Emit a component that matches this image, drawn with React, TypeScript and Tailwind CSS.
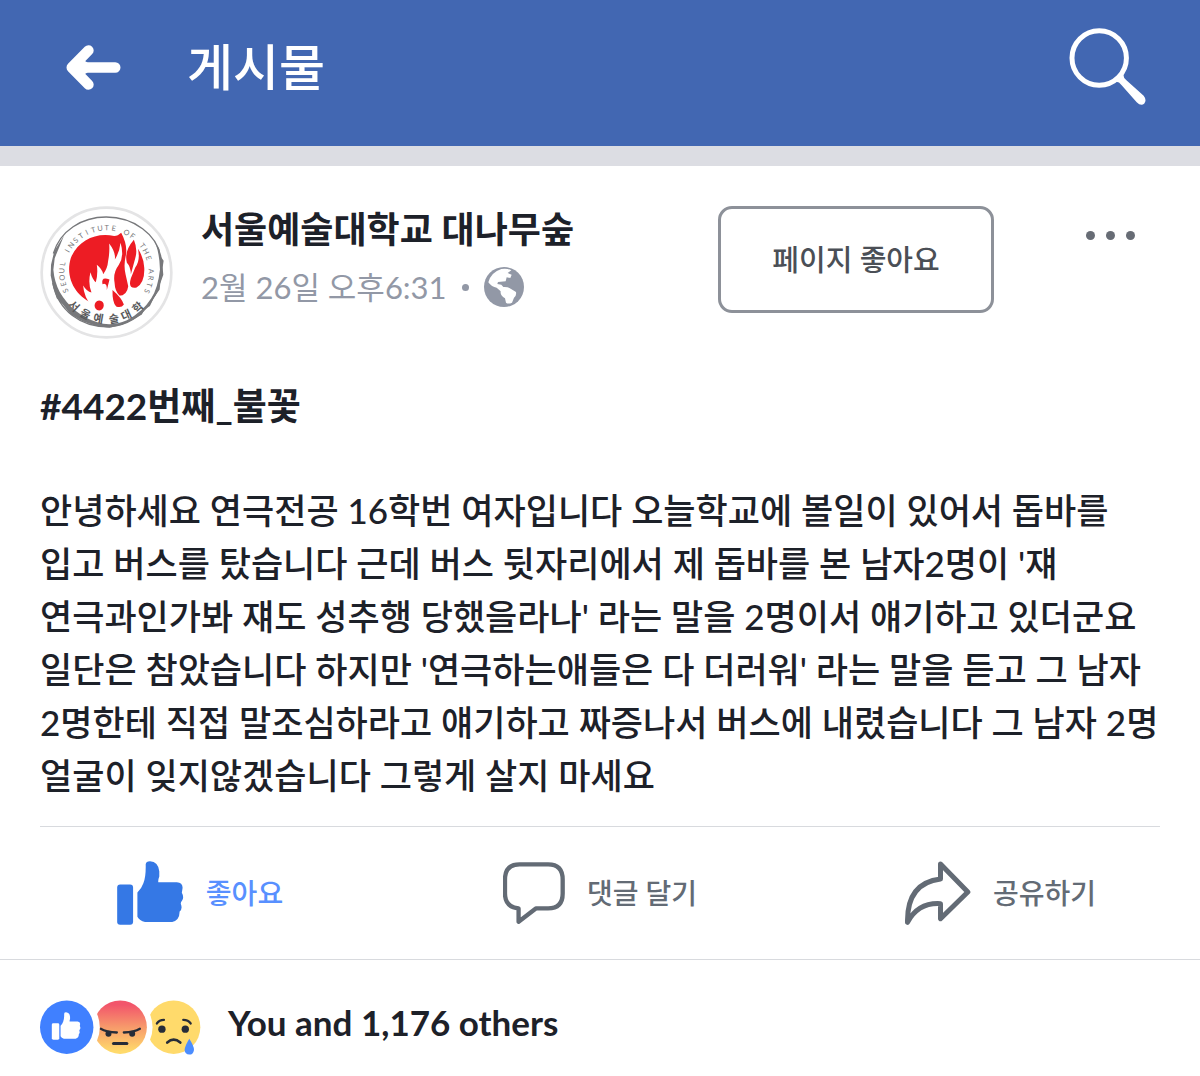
import React from 'react';

interface ActionButtonProps {
  label: string;
  active?: boolean;
  children: React.ReactNode;
}

const LIKE_PALM =
  'M138 57 Q139 48 151 48 Q176 50 179 78 V94 Q175 104 176 111 H232 Q251 113 249 130 L247 143 Q255 157 247 168 Q243 172 244 177 Q250 192 240 200 Q241 224 218 231 H136 Q119 227 113 215 V142 Q125 131 131 114 Q139 95 138 57Z';

const ArrowIcon = () => (
  <svg viewBox="78 72 164 134" className="h-[45px] w-[55px]" aria-hidden="true">
    <path
      d="M145 88 L95 139 L145 190 M95 139 H225"
      fill="none"
      stroke="#fff"
      strokeWidth="31"
      strokeLinecap="round"
      strokeLinejoin="round"
    />
    <path d="M118 110 L142 124 V154 L118 168Z" fill="#fff" />
  </svg>
);

const SearchIcon = () => (
  <svg viewBox="86 52 232 231" className="size-[77px]" aria-hidden="true">
    <circle cx="177" cy="142" r="82" fill="none" stroke="#fff" strokeWidth="15" />
    <path
      d="M225 214 Q236 212 244 223 L290 275 Q303 288 313 279 Q321 269 311 256 L259 209 Q248 201 251 190Z"
      fill="#fff"
    />
  </svg>
);

const GlobeIcon = () => (
  <svg viewBox="878 215 120 120" className="size-10" aria-hidden="true">
    <circle cx="938" cy="275" r="60" fill="#9298a6" />
    <path
      d="M891 261 Q899 231 930 221 Q948 218 960 225 L949 233 L961 238 L957 248 L946 246 L943 258 L920 260 L918 266 L930 268 L936 275 Q950 274 958 280 L974 290 Q976 301 968 307 L962 322 Q950 327 944 322 L941 309 Q926 300 928 288 L916 277 Q901 275 891 261Z"
      fill="#fff"
    />
  </svg>
);

const LikeIcon = () => (
  <svg viewBox="52 47 201 193" className="h-[64px] w-[67px]" aria-hidden="true">
    <rect x="52" y="118" width="48" height="121" rx="9" fill="#3578e5" />
    <path d={LIKE_PALM} fill="#3578e5" />
  </svg>
);

const CommentIcon = () => (
  <svg viewBox="68 57 187 187" className="size-[62px]" aria-hidden="true">
    <path
      d="M118 64 H204 Q248 64 248 110 V152 Q248 197 204 197 H167 L115 237 V197 Q74 193 74 152 V110 Q74 64 118 64Z"
      fill="none"
      stroke="#636b75"
      strokeWidth="13"
      strokeLinejoin="round"
    />
  </svg>
);

const ShareIcon = () => (
  <svg viewBox="46 50 200 192" className="h-[64px] w-[67px]" aria-hidden="true">
    <path
      d="M155 59 L237 143 L155 223 V178 Q88 174 56 234 Q54 116 155 104Z"
      fill="none"
      stroke="#636b75"
      strokeWidth="15"
      strokeLinejoin="round"
    />
  </svg>
);

const RING_LATIN = 'SEOUL INSTITUTE OF THE ARTS'.split('');

// Letter and its angle on the ring, measured from straight down
const RING_HANGUL: [string, number][] = [
  ['서', 44],
  ['울', 27],
  ['예', 10],
  ['술', -9],
  ['대', -25],
  ['학', -42],
];

const PageLogo = () => (
  <svg viewBox="32 34 398 398" className="size-[133px] shrink-0" role="img" aria-label="서울예술대학">
    <circle cx="231" cy="233" r="194" fill="#fff" stroke="#e4e4e5" strokeWidth="8" />
    {/* Brushed outer ring */}
    <path
      d="M72 176 C92 108 157 67 230 67 C312 67 384 119 394 190 C409 283 344 384 245 395 C153 400 86 345 70 263"
      fill="none"
      stroke="#77787b"
      strokeWidth="4"
    />
    <path
      d="M378 146 L389 163 L393 185 L402 198 L399 218 L401 240 L392 265 L390 284 L372 310 L361 333 L343 345 L337 359 L311 374 L278 389 L240 398 L201 393 L159 379 L123 357 L99 327 L82 310 L71 275 L64 242 L65 210 L75 168 L104 122 L76 190 L72 225 Q75 262 91 291 Q130 358 204 382 Q245 396 292 376 Q340 350 365 310 Q385 280 391 224 Q390 180 378 146Z"
      fill="#77787b"
    />
    {/* Flame emblem */}
    <path
      d="M275 114 C268 120 262 124 254 124 C200 112 145 137 124 190 C106 250 140 308 196 327 L262 302 Q292 306 296 274 L288 238 Q282 214 288 186 Q296 153 275 114Z"
      fill="#ed1c24"
    />
    <path
      d="M186 332 Q164 308 161 272 Q172 290 186 293 Q175 265 183 232 Q189 254 199 262 Q206 236 202 210 Q219 224 221 238 Q234 222 236 198 Q241 172 239 146 Q259 172 256 194 Q270 172 273 144 Q285 185 268 210 Q250 234 255 262 Q256 290 271 303 L290 340Z"
      fill="#fff"
    />
    <path
      d="M313 135 Q283 169 292 204 Q303 215 304 238 L317 190 Q325 164 313 135Z M325 162 Q333 196 317 218 L304 250 Q294 283 321 278 Q346 262 344 219 Q342 186 325 162Z"
      fill="#ed1c24"
    />
    <path
      d="M209 317 C228 317 227 346 209 347 C191 346 191 318 209 317Z M249 285 Q277 309 283 329 Q276 340 260 335 Q248 322 249 285Z M232 285 L240 254 Q214 244 219 268 Q233 262 232 285Z"
      fill="#ed1c24"
    />
    <g className="font-['Lato',sans-serif]" fontSize="22" fill="#77787b" textAnchor="middle">
      {RING_LATIN.map((char, i) => (
        <text key={i} x="231" y="107" transform={`rotate(${-114 + i * 8.8} 231 233)`}>
          {char}
        </text>
      ))}
    </g>
    <g className="font-['Noto_Sans_CJK_KR',sans-serif] font-bold" fontSize="33" fill="#58595b" textAnchor="middle">
      {RING_HANGUL.map(([char, angle]) => (
        <text key={char} x="231" y="385" transform={`rotate(${angle} 231 233)`}>
          {char}
        </text>
      ))}
    </g>
  </svg>
);

const Reactions = () => (
  <svg viewBox="30 44 482 164" className="h-[55px] w-[161px] shrink-0" role="img" aria-label="Like, Angry, Sad">
    <defs>
      <linearGradient id="angry" x1="0" y1="0" x2="0" y2="1">
        <stop offset="0.08" stopColor="#f2556b" />
        <stop offset="0.5" stopColor="#f79a6b" />
        <stop offset="0.95" stopColor="#ffda6b" />
      </linearGradient>
    </defs>
    <circle cx="430" cy="125" r="80" fill="#ffda6b" />
    <g fill="none" stroke="#262c38" strokeWidth="7" strokeLinecap="round">
      <path d="M380 114 Q387 103 401 103 M459 103 Q474 103 481 114" />
      <path d="M411 171 Q430 154 450 171" strokeWidth="8" />
    </g>
    <circle cx="395" cy="131" r="11" fill="#262c38" />
    <circle cx="465" cy="131" r="11" fill="#262c38" />
    <path d="M477 160 Q491 182 491 193 Q489 207 477 207 Q464 206 463 193 Q464 181 477 160Z" fill="#4b8dff" />

    <circle cx="270" cy="125" r="97" fill="#fff" />
    <circle cx="270" cy="125" r="80" fill="url(#angry)" />
    <g fill="none" stroke="#262c38" strokeLinecap="round">
      <path d="M212 130 Q228 140 260 141 M281 141 Q313 140 329 130" strokeWidth="7" />
      <path d="M250 174 H290" strokeWidth="9" />
    </g>
    <circle cx="235" cy="145" r="9" fill="#262c38" />
    <circle cx="306" cy="145" r="9" fill="#262c38" />

    <circle cx="110" cy="125" r="99" fill="#fff" />
    <circle cx="110" cy="125" r="80" fill="#4080ff" />
    <g transform="translate(43 60) scale(0.43)" fill="#fff">
      <rect x="52" y="124" width="52" height="114" rx="10" />
      <path d={LIKE_PALM} />
    </g>
  </svg>
);

const ActionButton: React.FC<ActionButtonProps> = ({ label, active, children }) => (
  <button type="button" className="flex items-center justify-center gap-[22px]">
    {children}
    <span className={active ? 'text-[28px] font-medium text-[#5890ff]' : 'text-[28px] font-medium text-[#636b75]'}>
      {label}
    </span>
  </button>
);

const BODY_LINES = [
  '안녕하세요 연극전공 16학번 여자입니다 오늘학교에 볼일이 있어서 돕바를',
  "입고 버스를 탔습니다 근데 버스 뒷자리에서 제 돕바를 본 남자2명이 '쟤",
  "연극과인가봐 쟤도 성추행 당했을라나' 라는 말을 2명이서 얘기하고 있더군요",
  "일단은 참았습니다 하지만 '연극하는애들은 다 더러워' 라는 말을 듣고 그 남자",
  '2명한테 직접 말조심하라고 얘기하고 짜증나서 버스에 내렸습니다 그 남자 2명',
  '얼굴이 잊지않겠습니다 그렇게 살지 마세요',
];

export default function App() {
  return (
    <div className="min-h-screen bg-white font-['Lato','Noto_Sans_CJK_KR',sans-serif] text-[#1d2129]">
      <header className="flex items-start justify-between border-b-20 border-[#dcdde3] bg-[#4267b2] pr-[54px] pl-[66px]">
        <div className="flex h-[134px] items-center gap-[66px]">
          <button type="button" aria-label="Back">
            <ArrowIcon />
          </button>
          <h1 className="text-[50px] leading-none font-medium text-white">게시물</h1>
        </div>
        <button type="button" aria-label="Search" className="h-[146px] pb-[14px]">
          <SearchIcon />
        </button>
      </header>

      <main>
        <article>
          <div className="px-10 pt-10">
            <div className="flex items-start">
              <PageLogo />
              <div className="ml-7 flex-1 whitespace-nowrap">
                <h2 className="text-[36px] leading-[46px] font-bold">서울예술대학교 대나무숲</h2>
                <div className="mt-2 flex items-center text-[31px] leading-[54px] text-[#9298a6]">
                  <time>2월 26일 오후6:31</time>
                  <span className="mx-[15px] size-[7px] rounded-full bg-[#9298a6]" />
                  <GlobeIcon />
                </div>
              </div>
              <button
                type="button"
                className="h-[107px] w-[276px] rounded-[14px] border-3 border-[#8d9199] text-[29px] font-medium text-[#4b4f56]"
              >
                페이지 좋아요
              </button>
              <button type="button" aria-label="More" className="mr-[25px] ml-[92px] flex gap-[11px] py-[25px]">
                <span className="size-[9px] rounded-full bg-[#676c75]" />
                <span className="size-[9px] rounded-full bg-[#676c75]" />
                <span className="size-[9px] rounded-full bg-[#676c75]" />
              </button>
            </div>

            <p className="mt-[41px] text-[37px] leading-[52px] font-bold">#4422번째_불꽃</p>
            <p className="mt-[52px] text-[35px] leading-[53px] font-medium whitespace-nowrap">
              {BODY_LINES.map((line) => (
                <span key={line} className="block">
                  {line}
                </span>
              ))}
            </p>
          </div>

          <div className="mx-10 mt-6 border-t border-[#d8dade]" />
          <div className="grid h-[133px] grid-cols-3 border-b border-[#d8dade]">
            <ActionButton label="좋아요" active>
              <LikeIcon />
            </ActionButton>
            <ActionButton label="댓글 달기">
              <CommentIcon />
            </ActionButton>
            <ActionButton label="공유하기">
              <ShareIcon />
            </ActionButton>
          </div>

          <div className="flex items-start gap-[27px] px-10 py-10">
            <Reactions />
            <span className="text-[35px] leading-[44px] font-bold">You and 1,176 others</span>
          </div>
        </article>
      </main>
    </div>
  );
}
